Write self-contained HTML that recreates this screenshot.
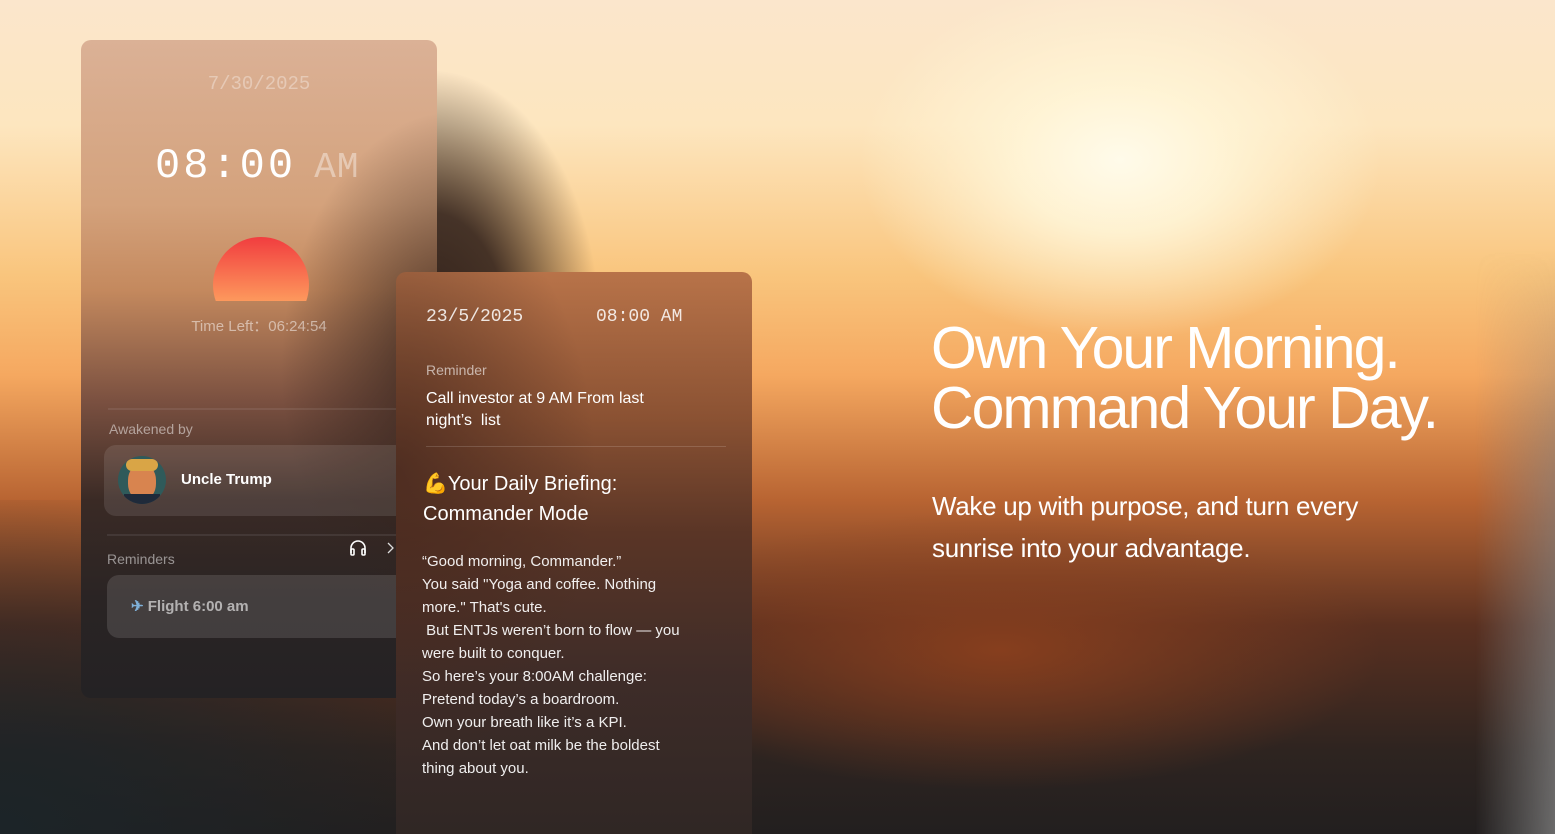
<!DOCTYPE html>
<html style="width:1555px;height:834px;overflow:hidden;background:#221f1f"><head><meta charset="utf-8"><style>
*{margin:0;padding:0;box-sizing:border-box}
body{width:1555px;height:834px;overflow:hidden;position:relative;font-family:"Liberation Sans",sans-serif;
background:
radial-gradient(ellipse 260px 180px at 1120px 160px,#fffbea 0%,rgba(255,245,215,0.9) 40%,rgba(255,240,200,0) 100%),
radial-gradient(ellipse 380px 140px at 1000px 650px,rgba(140,64,30,0.9),rgba(140,64,30,0) 100%),
radial-gradient(ellipse 170px 260px at 430px 330px,rgba(50,34,28,1) 0%,rgba(50,34,28,0.9) 45%,rgba(50,34,28,0) 100%),
linear-gradient(180deg,#fbe6cc 0%,#fde6bf 15%,#f9c57d 33%,#f5a860 45%,#b86432 60%,#5a3020 75%,#2e2420 90%,#221f1f 100%);
}
.edge{position:absolute;right:0;top:250px;width:80px;height:584px;background:linear-gradient(180deg,rgba(140,140,140,0),rgba(130,130,130,0.6) 40%,rgba(120,120,120,0.85));-webkit-mask:linear-gradient(90deg,transparent,#000);mask:linear-gradient(90deg,transparent,#000)}
.blL{position:absolute;left:0;top:500px;width:420px;height:334px;background:radial-gradient(ellipse at 0 100%,#1c2428,rgba(28,36,40,0) 75%)}
.c1{position:absolute;left:81px;top:40px;width:356px;height:658px;border-radius:10px;overflow:hidden;
background:
radial-gradient(ellipse 180px 260px at 380px 330px,rgba(50,34,28,0.95),rgba(50,34,28,0) 100%),
linear-gradient(180deg,#dbb196 0%,#d4a27c 25%,#c4895e 38%,#7a5040 55%,#3a2a25 70%,#2a2424 85%,#242224 100%);}
.mono{font-family:"Liberation Mono","DejaVu Sans Mono",monospace}
.date1{position:absolute;top:33px;width:100%;text-align:center;color:rgba(255,255,255,0.35);font-size:19px}
.time1{position:absolute;top:102px;left:74px;color:#fff;font-size:42px;letter-spacing:3px;white-space:nowrap}
.time1 span{color:rgba(255,255,255,0.4);font-size:36px;letter-spacing:1px;margin-left:-10px}
.sun{position:absolute;left:132px;top:197px;width:96px;height:64px;overflow:hidden}
.sun div{width:96px;height:96px;border-radius:50%;background:linear-gradient(180deg,#f13d3f,#fe9d5e 70%)}
.tl{position:absolute;top:275px;width:100%;text-align:center;color:rgba(255,255,255,0.5);font-size:15px}
.hr{position:absolute;height:2px;background:rgba(255,255,255,0.08)}
.lab{position:absolute;color:rgba(255,255,255,0.5);font-size:14px}
.box{position:absolute;background:rgba(255,255,255,0.1);border-radius:12px}
.c2{position:absolute;left:396px;top:272px;width:356px;height:580px;border-radius:10px;
background:
radial-gradient(ellipse 200px 300px at 0 200px,rgba(70,40,30,0.8),rgba(70,40,30,0) 100%),
linear-gradient(180deg,#b87349 0%,#8b5233 25%,#5a3526 45%,#3e2c28 70%,#2e2624 100%);
color:#fff}
.c2 p{position:absolute}
</style></head><body>
<div class="blL"></div>
<div class="edge"></div>
<div class="c1">
 <div class="date1 mono">7/30/2025</div>
 <div class="time1 mono">08:00 <span>AM</span></div>
 <div class="sun"><div></div></div>
 <div class="tl">Time Left：06:24:54</div>
 <div class="hr" style="left:27px;top:368px;width:320px"></div>
 <div class="lab" style="left:28px;top:381px">Awakened by</div>
 <div class="box" style="left:23px;top:405px;width:340px;height:71px"></div>
 <div style="position:absolute;left:37px;top:416px;width:48px;height:48px;border-radius:50%;overflow:hidden;background:#2f5a5a"><div style="position:absolute;left:10px;top:8px;width:28px;height:36px;border-radius:45%;background:#d8844f"></div><div style="position:absolute;left:8px;top:3px;width:32px;height:12px;border-radius:8px;background:#d9a546"></div><div style="position:absolute;left:6px;top:38px;width:36px;height:14px;background:#1f2a3a"></div></div>
 <div style="position:absolute;left:100px;top:431px;color:#fff;font-weight:bold;font-size:15px">Uncle Trump</div>
 <div class="hr" style="left:26px;top:494px;width:320px"></div>
 <div class="lab" style="left:26px;top:511px">Reminders</div>
 <svg style="position:absolute;left:267px;top:499px" width="20" height="18" viewBox="0 0 20 18" fill="none" stroke="#fff" stroke-width="1.6"><path d="M3 14V9a7 7 0 0 1 14 0v5"/><rect x="3" y="10" width="3" height="6" rx="1"/><rect x="14" y="10" width="3" height="6" rx="1"/></svg>
 <svg style="position:absolute;left:305px;top:501px" width="8" height="14" viewBox="0 0 8 14" fill="none" stroke="#ddd" stroke-width="1.3"><path d="M2 2l5 5-5 5"/></svg>
 <div class="box" style="left:26px;top:535px;width:340px;height:63px;background:rgba(255,255,255,0.12)"></div>
 <div style="position:absolute;left:50px;top:557px;color:rgba(255,255,255,0.6);font-weight:bold;font-size:15px"><span style="color:#7fb0d8">✈</span> Flight 6:00 am</div>
</div>
<div class="c2">
 <p class="mono" style="left:30px;top:35px;font-size:18px;color:rgba(255,255,255,0.85)">23/5/2025</p>
 <p class="mono" style="left:200px;top:35px;font-size:18px;color:rgba(255,255,255,0.85)">08:00 AM</p>
 <p style="left:30px;top:90px;font-size:14px;color:rgba(255,255,255,0.6)">Reminder</p>
 <p style="left:30px;top:116px;font-size:16px;line-height:22px;width:240px">Call investor at 9 AM From last night’s&nbsp; list</p>
 <div class="hr" style="left:30px;top:174px;width:300px;height:1px;background:rgba(255,255,255,0.15)"></div>
 <p style="left:27px;top:197px;font-size:20px;line-height:30px">💪Your Daily Briefing:<br>Commander Mode</p>
 <p style="left:26px;top:278px;font-size:15px;line-height:23px;width:270px;color:rgba(255,255,255,0.92)">“Good morning, Commander.”<br>You said "Yoga and coffee. Nothing more." That's cute.<br>&nbsp;But ENTJs weren’t born to flow — you were built to conquer.<br>So here’s your 8:00AM challenge:<br>Pretend today’s a boardroom.<br>Own your breath like it’s a KPI.<br>And don’t let oat milk be the boldest thing about you.</p>
</div>
<div style="position:absolute;left:931px;top:318px;color:#fff;font-size:59px;line-height:60px;letter-spacing:-2px">Own Your Morning.<br>Command Your Day.</div>
<div style="position:absolute;left:932px;top:485px;color:#fff;font-size:26px;line-height:42px;letter-spacing:-0.3px">Wake up with purpose, and turn every<br>sunrise into your advantage.</div>
</body></html>
